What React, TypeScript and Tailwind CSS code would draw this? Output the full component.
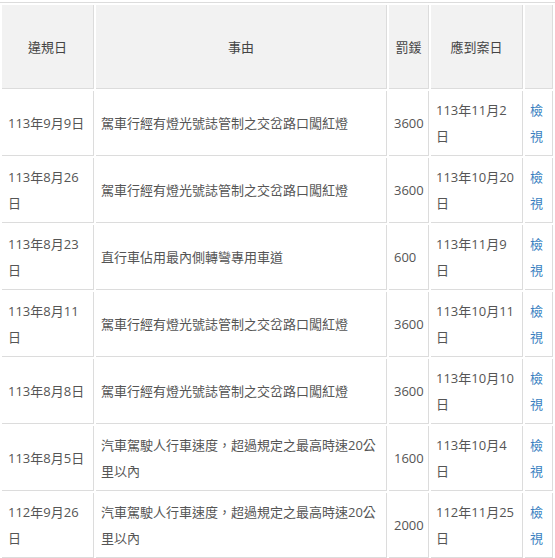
import React from "react";

const rows = [
  { date: "113年9月9日", reason: "駕車行經有燈光號誌管制之交岔路口闖紅燈", fine: "3600", due: "113年11月2日" },
  { date: "113年8月26日", reason: "駕車行經有燈光號誌管制之交岔路口闖紅燈", fine: "3600", due: "113年10月20日" },
  { date: "113年8月23日", reason: "直行車佔用最內側轉彎專用車道", fine: "600", due: "113年11月9日" },
  { date: "113年8月11日", reason: "駕車行經有燈光號誌管制之交岔路口闖紅燈", fine: "3600", due: "113年10月11日" },
  { date: "113年8月8日", reason: "駕車行經有燈光號誌管制之交岔路口闖紅燈", fine: "3600", due: "113年10月10日" },
  { date: "113年8月5日", reason: "汽車駕駛人行車速度，超過規定之最高時速20公\n里以內", fine: "1600", due: "113年10月4日" },
  { date: "112年9月26日", reason: "汽車駕駛人行車速度，超過規定之最高時速20公\n里以內", fine: "2000", due: "112年11月25日" },
];

const th =
  "h-[84px] bg-[#f2f2f2] border-r border-b border-[#dcdcdc] px-[5px] text-center align-middle font-normal text-[#444]";
const td =
  "border-r border-b border-[#dcdcdc] px-[5px] py-[6px] text-left align-middle text-[#555]";

export default function App() {
  return (
    <div className="w-[555px] bg-white pt-[2px] font-['Open_Sans','Noto_Sans_CJK_TC',sans-serif] text-[13px] leading-[26px]">
      <table className="w-[555px] table-fixed border-separate border-spacing-[2px] border-t border-[#dcdcdc]">
        <thead>
          <tr>
            <th className={`${th} w-[92px]`}>違規日</th>
            <th className={`${th} w-[291px]`}>事由</th>
            <th className={`${th} w-[40px] px-[3px]`}>罰鍰</th>
            <th className={`${th} w-[92px]`}>應到案日</th>
            <th className={`${th} w-[28px]`}></th>
          </tr>
        </thead>
        <tbody>
          {rows.map((r, i) => (
            <tr key={i}>
              <td className={`${td} pl-[6px]`}>{r.date}</td>
              <td className={`${td} whitespace-pre-line`}>{r.reason}</td>
              <td className={`${td} px-[3px]`}>{r.fine}</td>
              <td className={td}>{r.due}</td>
              <td className={td}>
                <a href="#" className="text-[#3a7fc1]">
                  檢視
                </a>
              </td>
            </tr>
          ))}
        </tbody>
      </table>
    </div>
  );
}
